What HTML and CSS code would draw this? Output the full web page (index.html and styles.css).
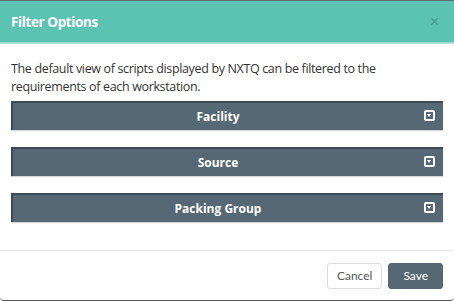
FILE: index.html
```html
<!DOCTYPE html>
<html lang="en">
<head>
    <meta charset="UTF-8">
    <title>Filter Options</title>
    <link rel="stylesheet" href="styles.css">
</head>
<body>
    <div class="modal">
        <div class="modal-header">
            <h4>Filter Options</h4>
            <span class="close">&times;</span>
        </div>
        <div class="modal-body">
            <p>The default view of scripts displayed by NXTQ can be filtered to the requirements of each workstation.</p>
            <div class="panel">
                <span>Facility</span>
                <i class="toggle"></i>
            </div>
            <div class="panel">
                <span>Source</span>
                <i class="toggle"></i>
            </div>
            <div class="panel">
                <span>Packing Group</span>
                <i class="toggle"></i>
            </div>
        </div>
        <div class="modal-footer">
            <button class="btn">Cancel</button>
            <button class="btn btn-primary">Save</button>
        </div>
    </div>
</body>
</html>
```
FILE: styles.css
```css
html, body {
    margin: 0;
    padding: 0;
    background-color: #fff;
}
.modal {
    width: 454px;
    height: 301px;
    box-sizing: border-box;
    border-top: 1px solid #6b6b6b;
    border-bottom: 1px solid #555;
    border-radius: 0 0 4px 4px;
    font-family: "Open Sans", Arial, sans-serif;
    color: #333;
    display: flex;
    flex-direction: column;
}
.modal-header {
    background-color: #5cc2b1;
    height: 41px;
    border-bottom: 2px solid #a9ddd4;
    padding: 0 11px;
    display: flex;
    align-items: center;
    justify-content: space-between;
}
.modal-header h4 {
    margin: 0;
    color: #fff;
    font-size: 13.5px;
    font-weight: 700;
    letter-spacing: -0.4px;
}
.close {
    color: #3f9d8e;
    font-size: 16px;
    margin-right: 4px;
    font-family: Arial, sans-serif;
}
.modal-body {
    padding: 16px 11px 0;
    height: 207px;
    box-sizing: border-box;
    border-bottom: 1px solid #e5e5e5;
}
.modal-body p {
    margin: 0 0 5px;
    font-size: 12.5px;
    line-height: 18px;
    letter-spacing: -0.35px;
}
.panel {
    background-color: #566874;
    height: 27px;
    border-top: 2px solid #3f4b53;
    border-left: 2px solid #3f4b53;
    box-shadow: 0 1px 1px #d5d5d5;
    margin-bottom: 17px;
    padding-right: 20px;
    color: #fff;
    font-size: 12px;
    font-weight: 700;
    display: flex;
    align-items: center;
    justify-content: center;
    position: relative;
}
.toggle {
    position: absolute;
    right: 8px;
    top: 7px;
    width: 7px;
    height: 7px;
    border: 2px solid #fff;
    border-radius: 2px;
    box-sizing: content-box;
}
.toggle::after {
    content: "";
    position: absolute;
    left: 1px;
    top: 2px;
    border-left: 2.5px solid transparent;
    border-right: 2.5px solid transparent;
    border-top: 3px solid #fff;
}
.modal-footer {
    flex: 1;
    display: flex;
    justify-content: flex-end;
    align-items: center;
    gap: 6px;
    padding: 0 11px 0 0;
}
.btn {
    font-family: Lato, Arial, sans-serif;
    font-size: 12px;
    height: 26px;
    padding: 0 9px;
    border: 1px solid #ddd;
    border-radius: 3px;
    background-color: #fff;
    color: #555;
}
.btn-primary {
    background-color: #566874;
    border-color: #566874;
    color: #fff;
    padding: 0 14px;
}
```
